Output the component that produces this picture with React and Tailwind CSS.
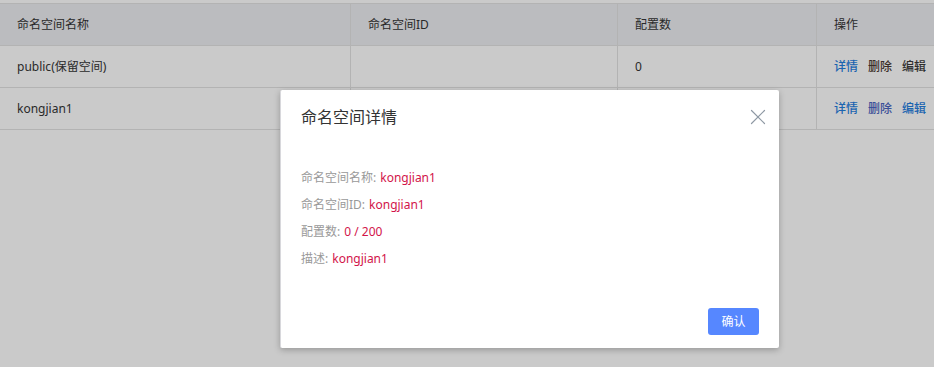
import { X } from "lucide-react";

const COLS = ["w-[351px]", "w-[267px]", "w-[199px]", "flex-1"];

const rows = [
  { name: "public(保留空间)", id: "", count: "0", reserved: true },
  { name: "kongjian1", id: "kongjian1", count: "0", reserved: false },
];

// detail fields shown in the modal
const details = [
  ["命名空间名称", "kongjian1"],
  ["命名空间ID", "kongjian1"],
  ["配置数", "0 / 200"],
  ["描述", "kongjian1"],
];

function Cell({ i, children }) {
  return (
    <div
      className={`${COLS[i]} flex items-center pl-[17px] ${
        i < 3 ? "border-r border-[#b3b3b3]" : ""
      }`}
    >
      {children}
    </div>
  );
}

export default function App() {
  return (
    <div
      className="relative h-[367px] w-[934px] overflow-hidden bg-[#cacaca] text-[12px] text-[#292929]"
      style={{ fontFamily: '"Noto Sans", "Noto Sans CJK SC", sans-serif' }}
    >
      {/* table under the mask */}
      <div className="mt-[3px] border-t border-[#b3b3b3]">
        <div className="flex h-[42px] border-b border-[#b3b3b3] bg-[#bbbcbf]">
          {["命名空间名称", "命名空间ID", "配置数", "操作"].map((h, i) => (
            <Cell key={h} i={i}>
              {h}
            </Cell>
          ))}
        </div>
        {rows.map((r) => (
          <div key={r.name} className="flex h-[42px] border-b border-[#b3b3b3]">
            <Cell i={0}>{r.name}</Cell>
            <Cell i={1}>{r.reserved ? "" : r.id}</Cell>
            <Cell i={2}>{r.count}</Cell>
            <Cell i={3}>
              <div className="flex gap-[10px] font-medium">
                <span className="text-[#1b64b0]">详情</span>
                <span className={r.reserved ? "text-[#3a2e28]" : "text-[#3a4f98]"}>删除</span>
                <span className={r.reserved ? "text-[#2e2e2e]" : "text-[#1b64b0]"}>编辑</span>
              </div>
            </Cell>
          </div>
        ))}
      </div>

      {/* detail modal */}
      <div className="absolute left-[280px] top-[90px] flex h-[258px] w-[499px] flex-col rounded-[2px] border-l border-[#d8d8dc] bg-white shadow-[0_2px_6px_rgba(0,0,0,0.25)]">
        <div className="flex items-center justify-between pl-[20px] pr-[8px] pt-[14px]">
          <h3 className="text-[16px] leading-[24px] text-[#333]">命名空间详情</h3>
          <X size={26} strokeWidth={1.1} className="text-[#8f99a4]" />
        </div>
        <div className="mt-[39px] flex flex-col gap-[9px] pl-[20px]">
          {details.map(([k, v]) => (
            <div key={k} className="leading-[18px]">
              <span className="mr-[4px] text-[#999]">{k}:</span>
              <span className="text-[#d2144a]">{v}</span>
            </div>
          ))}
        </div>
        <div className="mt-auto flex justify-end pb-[13px] pr-[20px]">
          <button className="h-[27px] w-[51px] rounded-[3px] bg-[#5687ff] text-[12px] text-white">
            确认
          </button>
        </div>
      </div>
    </div>
  );
}
